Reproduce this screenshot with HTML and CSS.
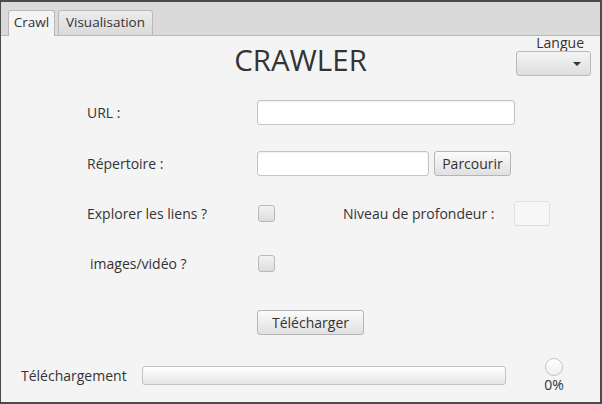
FILE: index.html
```html
<!DOCTYPE html>
<html lang="fr">
<head>
<meta charset="utf-8">
<title>Crawler</title>
<link rel="stylesheet" href="styles.css">
</head>
<body>
<div class="window">
  <div class="tabbar">
    <div class="tab selected">Crawl</div>
    <div class="tab">Visualisation</div>
  </div>
  <div class="content">
    <div class="head">
      <div></div>
      <h1 class="title">CRAWLER</h1>
      <div class="lang">
        <span class="lang-label">Langue</span>
        <div class="combo"><span class="arrow"></span></div>
      </div>
    </div>
    <div class="form">
      <div class="row r1">
        <span class="label">URL :</span>
        <div class="field url"></div>
      </div>
      <div class="row r2">
        <span class="label">Répertoire :</span>
        <div class="field dir"></div>
        <button class="btn browse">Parcourir</button>
      </div>
      <div class="row r3">
        <span class="label">Explorer les liens ?</span>
        <span class="check"></span>
        <span class="label depth-label">Niveau de profondeur :</span>
        <div class="field depth"></div>
      </div>
      <div class="row r4">
        <span class="label media">images/vidéo ?</span>
        <span class="check"></span>
      </div>
      <div class="row r5">
        <button class="btn download">Télécharger</button>
      </div>
    </div>
    <div class="bottom">
      <span class="dl-label">Téléchargement</span>
      <div class="progress"></div>
      <div class="indicator">
        <span class="circle"></span>
        <span class="pct">0%</span>
      </div>
    </div>
  </div>
</div>
</body>
</html>
```
FILE: styles.css
```css
* { box-sizing: border-box; }
html, body { margin: 0; padding: 0; }
body {
  width: 602px;
  height: 404px;
  font-family: "Open Sans", "Noto Sans", sans-serif;
  font-size: 14px;
  color: #333333;
  background: #4b4b4b;
}
.window {
  width: 602px;
  height: 404px;
  border-top: 2px solid #4b4b4b;
  border-left: 1px solid #4b4b4b;
  border-right: 2px solid #4b4b4b;
  border-bottom: 2px solid #4b4b4b;
  display: flex;
  flex-direction: column;
  background: #f4f4f4;
}
.tabbar {
  height: 34px;
  background: #dadada;
  border-bottom: 1px solid #b9b9b9;
  display: flex;
  align-items: flex-end;
  padding-left: 7px;
  gap: 3px;
}
.tab {
  height: 25px;
  line-height: 23px;
  border: 1px solid #b9b9b9;
  border-bottom: none;
  border-radius: 3px 3px 0 0;
  background: linear-gradient(#ececec, #dadada);
  font-size: 13.5px;
  text-align: center;
}
.tab.selected {
  background: #f4f4f4;
  height: 26px;
  margin-bottom: -1px;
  width: 47px;
}
.tab:not(.selected) { width: 95px; }
.content {
  flex: 1;
  display: flex;
  flex-direction: column;
}
.head {
  height: 64px;
  display: grid;
  grid-template-columns: 1fr auto 1fr;
}
.title {
  margin: 0;
  font-weight: normal;
  font-size: 29.5px;
  line-height: 30px;
  padding-top: 9px;
}
.lang {
  justify-self: end;
  margin-right: 9px;
  display: flex;
  flex-direction: column;
  align-items: flex-end;
}
.lang-label {
  line-height: 16px;
  margin-right: 7px;
  margin-top: -1px;
}
.combo {
  width: 75px;
  height: 25px;
  border: 1px solid #b9b9b9;
  border-radius: 3px;
  background: linear-gradient(#f4f4f4, #dedede);
  position: relative;
}
.arrow {
  position: absolute;
  right: 9px;
  top: 10px;
  width: 0;
  height: 0;
  border-left: 4px solid transparent;
  border-right: 4px solid transparent;
  border-top: 4px solid #333;
}
.form {
  display: flex;
  flex-direction: column;
  padding-left: 86px;
}
.row {
  height: 25px;
  display: flex;
  align-items: center;
}
.r2 { margin-top: 26px; }
.r3 { margin-top: 25px; }
.r4 { margin-top: 25px; }
.r5 { margin-top: 34px; padding-left: 170px; }
.label {
  width: 170px;
  flex: none;
  white-space: nowrap;
}
.media { padding-left: 3px; }
.field {
  height: 25px;
  background: #ffffff;
  border: 1px solid #c4c4c4;
  border-radius: 3px;
  box-shadow: inset 0 1px 2px rgba(0,0,0,0.06);
}
.url { width: 258px; }
.dir { width: 172px; }
.btn {
  height: 25px;
  font-family: inherit;
  font-size: 14px;
  color: #333;
  border: 1px solid #b5b5b5;
  border-radius: 3px;
  background: linear-gradient(#fbfbfb, #e0e0e0);
  padding: 0;
}
.browse { width: 77px; margin-left: 5px; }
.download { width: 107px; }
.check {
  width: 17px;
  height: 17px;
  flex: none;
  border: 1px solid #b9b9b9;
  border-radius: 3px;
  background: linear-gradient(#f2f2f2, #dddddd);
  margin-left: 1px;
}
.depth-label {
  width: auto;
  margin-left: 68px;
}
.depth {
  width: 36px;
  margin-left: auto;
  margin-right: 50px;
  background: #f7f7f7;
  border-color: #e0e0e0;
  box-shadow: none;
}
.bottom {
  margin-top: 23px;
  display: flex;
  align-items: center;
  padding-left: 20px;
}
.dl-label {
  width: 121px;
  flex: none;
}
.progress {
  width: 364px;
  height: 19px;
  border: 1px solid #c4c4c4;
  border-radius: 3px;
  background: linear-gradient(#ffffff, #e6e6e6);
}
.indicator {
  margin-left: 36px;
  display: flex;
  flex-direction: column;
  align-items: center;
  width: 24px;
}
.circle {
  width: 18px;
  height: 18px;
  border-radius: 50%;
  border: 1px solid #c4c4c4;
  background: linear-gradient(#ffffff, #f0f0f0);
}
.pct {
  line-height: 17px;
  font-size: 14px;
}
```
